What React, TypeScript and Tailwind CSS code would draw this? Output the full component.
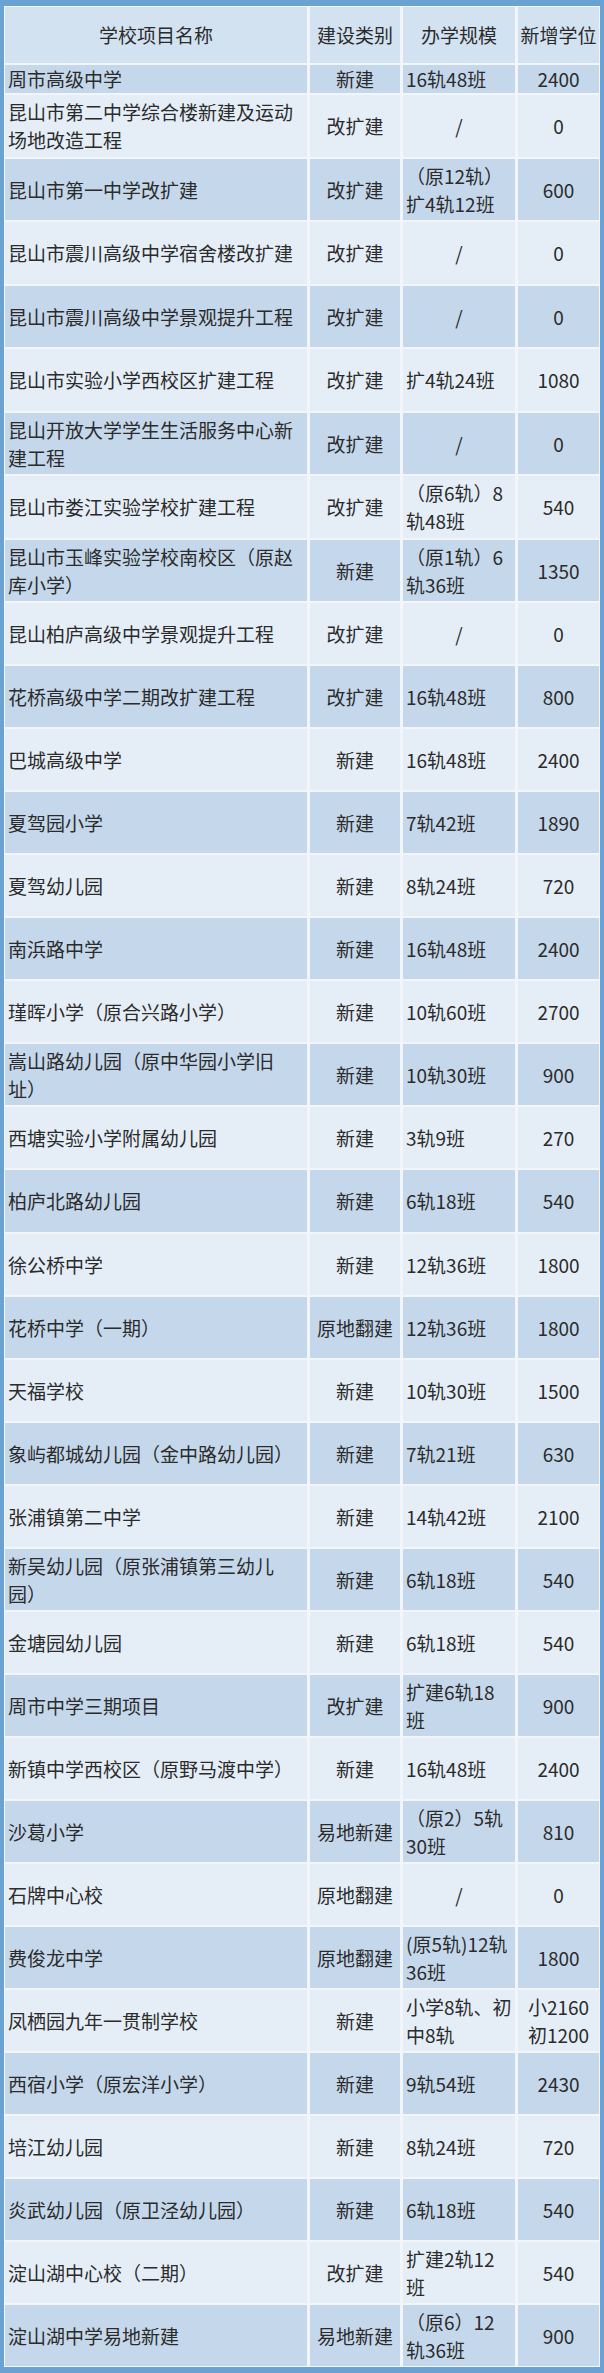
import React from "react";

type Row = {
  name: React.ReactNode;
  type: string;
  scale: React.ReactNode;
  scaleCenter?: boolean;
  seats: React.ReactNode;
  h?: string;
};

const rows: Row[] = [
  { name: "周市高级中学", type: "新建", scale: "16轨48班", seats: "2400", h: "h-[28px]" },
  { name: <>昆山市第二中学综合楼新建及运动<br />场地改造工程</>, type: "改扩建", scale: "/", scaleCenter: true, seats: "0", h: "h-[62px]" },
  { name: "昆山市第一中学改扩建", type: "改扩建", scale: <>（原12轨）<br />扩4轨12班</>, seats: "600" },
  { name: "昆山市震川高级中学宿舍楼改扩建", type: "改扩建", scale: "/", scaleCenter: true, seats: "0", h: "h-[62px]" },
  { name: "昆山市震川高级中学景观提升工程", type: "改扩建", scale: "/", scaleCenter: true, seats: "0" },
  { name: "昆山市实验小学西校区扩建工程", type: "改扩建", scale: "扩4轨24班", seats: "1080", h: "h-[62px]" },
  { name: <>昆山开放大学学生生活服务中心新<br />建工程</>, type: "改扩建", scale: "/", scaleCenter: true, seats: "0" },
  { name: "昆山市娄江实验学校扩建工程", type: "改扩建", scale: <>（原6轨）8<br />轨48班</>, seats: "540", h: "h-[62px]" },
  { name: <>昆山市玉峰实验学校南校区（原赵<br />库小学）</>, type: "新建", scale: <>（原1轨）6<br />轨36班</>, seats: "1350" },
  { name: "昆山柏庐高级中学景观提升工程", type: "改扩建", scale: "/", scaleCenter: true, seats: "0" },
  { name: "花桥高级中学二期改扩建工程", type: "改扩建", scale: "16轨48班", seats: "800" },
  { name: "巴城高级中学", type: "新建", scale: "16轨48班", seats: "2400" },
  { name: "夏驾园小学", type: "新建", scale: "7轨42班", seats: "1890" },
  { name: "夏驾幼儿园", type: "新建", scale: "8轨24班", seats: "720" },
  { name: "南浜路中学", type: "新建", scale: "16轨48班", seats: "2400" },
  { name: "瑾晖小学（原合兴路小学）", type: "新建", scale: "10轨60班", seats: "2700" },
  { name: <>嵩山路幼儿园（原中华园小学旧<br />址）</>, type: "新建", scale: "10轨30班", seats: "900" },
  { name: "西塘实验小学附属幼儿园", type: "新建", scale: "3轨9班", seats: "270" },
  { name: "柏庐北路幼儿园", type: "新建", scale: "6轨18班", seats: "540", h: "h-[62px]" },
  { name: "徐公桥中学", type: "新建", scale: "12轨36班", seats: "1800" },
  { name: "花桥中学（一期）", type: "原地翻建", scale: "12轨36班", seats: "1800" },
  { name: "天福学校", type: "新建", scale: "10轨30班", seats: "1500" },
  { name: "象屿都城幼儿园（金中路幼儿园）", type: "新建", scale: "7轨21班", seats: "630" },
  { name: "张浦镇第二中学", type: "新建", scale: "14轨42班", seats: "2100" },
  { name: <>新吴幼儿园（原张浦镇第三幼儿<br />园）</>, type: "新建", scale: "6轨18班", seats: "540" },
  { name: "金塘园幼儿园", type: "新建", scale: "6轨18班", seats: "540" },
  { name: "周市中学三期项目", type: "改扩建", scale: <>扩建6轨18<br />班</>, seats: "900" },
  { name: "新镇中学西校区（原野马渡中学）", type: "新建", scale: "16轨48班", seats: "2400" },
  { name: "沙葛小学", type: "易地新建", scale: <>（原2）5轨<br />30班</>, seats: "810" },
  { name: "石牌中心校", type: "原地翻建", scale: "/", scaleCenter: true, seats: "0" },
  { name: "费俊龙中学", type: "原地翻建", scale: <>(原5轨)12轨<br />36班</>, seats: "1800" },
  { name: "凤栖园九年一贯制学校", type: "新建", scale: <>小学8轨、初<br />中8轨</>, seats: <>小2160<br />初1200</> },
  { name: "西宿小学（原宏洋小学）", type: "新建", scale: "9轨54班", seats: "2430" },
  { name: "培江幼儿园", type: "新建", scale: "8轨24班", seats: "720" },
  { name: "炎武幼儿园（原卫泾幼儿园）", type: "新建", scale: "6轨18班", seats: "540" },
  { name: "淀山湖中心校（二期）", type: "改扩建", scale: <>扩建2轨12<br />班</>, seats: "540" },
  { name: "淀山湖中学易地新建", type: "易地新建", scale: <>（原6）12<br />轨36班</>, seats: "900" },
];

export default function App() {
  return (
    <div
      className="w-[604px] h-[2373px] bg-[#6aa2d4] px-[4px] pt-[6px] pb-[6px] text-[#2b2b2b]"
      style={{ fontFamily: '"Noto Sans CJK SC", "Noto Sans", sans-serif' }}
    >
      <div className="bg-[#f2f6fb] p-[1px] grid grid-cols-[302px_90px_112px_81px] gap-x-[3px] gap-y-[2px] text-[19px] leading-[28px]">
        <div className="h-[56px] bg-[#d2e2f1] flex items-center justify-center">学校项目名称</div>
        <div className="h-[56px] bg-[#d2e2f1] flex items-center justify-center">建设类别</div>
        <div className="h-[56px] bg-[#d2e2f1] flex items-center justify-center">办学规模</div>
        <div className="h-[56px] bg-[#d2e2f1] flex items-center justify-center">新增学位</div>
        {rows.map((r, i) => {
          const bg = i % 2 === 0 ? "bg-[#c5d8eb]" : "bg-[#e5eef7]";
          const h = r.h ?? "h-[61px]";
          return (
            <React.Fragment key={i}>
              <div className={`${h} ${bg} flex items-center pl-[3px] whitespace-nowrap`}>
                <div>{r.name}</div>
              </div>
              <div className={`${h} ${bg} flex items-center justify-center whitespace-nowrap`}>{r.type}</div>
              <div
                className={`${h} ${bg} flex items-center whitespace-nowrap ${r.scaleCenter ? "justify-center" : "pl-[3px]"}`}
              >
                <div>{r.scale}</div>
              </div>
              <div className={`${h} ${bg} flex items-center justify-center text-center whitespace-nowrap`}>
                <div>{r.seats}</div>
              </div>
            </React.Fragment>
          );
        })}
      </div>
    </div>
  );
}
